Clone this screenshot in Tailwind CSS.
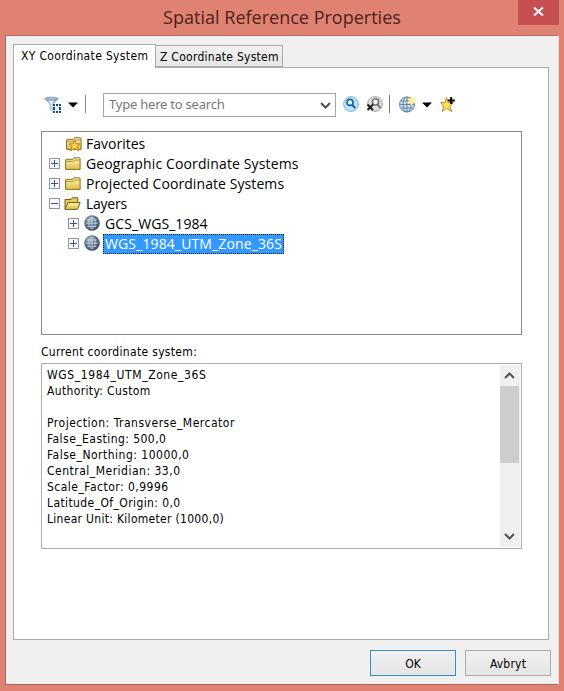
<!DOCTYPE html>
<html lang="en">
<head>
<meta charset="utf-8">
<title>Spatial Reference Properties</title>
<script src="https://cdn.jsdelivr.net/npm/@tailwindcss/browser@4"></script>
</head>
<body class="w-[564px] h-[691px] overflow-hidden bg-[#e08271] text-black font-['DejaVu_Sans_Condensed','DejaVu_Sans',sans-serif]">
<svg class="absolute w-0 h-0" aria-hidden="true">
  <defs>
    <linearGradient id="fold" x1="0" y1="0" x2="0" y2="1"><stop offset="0" stop-color="#fdf3b0"/><stop offset="1" stop-color="#dfbf4d"/></linearGradient>
    <radialGradient id="ball" cx=".38" cy=".3" r=".75"><stop offset="0" stop-color="#a3b1bf"/><stop offset=".5" stop-color="#62778c"/><stop offset="1" stop-color="#35485a"/></radialGradient>
    <symbol id="plus" viewBox="0 0 11 11"><rect x=".5" y=".5" width="10" height="10" fill="#f7f8fa" stroke="#8f959e"/><path d="M2 5.5h7M5.5 2v7" stroke="#34548e"/></symbol>
    <symbol id="minus" viewBox="0 0 11 11"><rect x=".5" y=".5" width="10" height="10" fill="#f7f8fa" stroke="#8f959e"/><path d="M2 5.5h7" stroke="#34548e"/></symbol>
    <symbol id="folder" viewBox="0 0 16 14"><path d="M.6 12.4V2.9q0-.6.6-.6h6.6l1.2-1.5h5.2q.9 0 .9.9v10.7z" fill="url(#fold)" stroke="#85701d"/><path d="M1 4.3h7.4l1-1.2h5.3" fill="none" stroke="#ad963b"/></symbol>
    <symbol id="globe" viewBox="0 0 16 16"><circle cx="8" cy="8" r="7.8" fill="url(#ball)"/><g fill="none" stroke="#e6edf5" stroke-width=".8" stroke-dasharray="1.6 .8"><path d="M3.4 5h9.2M2.4 8.2h11.2M3.4 11.4h9.2M8 2.4v11.4"/><ellipse cx="8" cy="8" rx="3.3" ry="5.6"/></g></symbol>
  </defs>
</svg>

<header class="relative h-[35px] flex justify-center">
  <h1 class="pt-[4px] leading-[26px] text-[18px] tracking-[0.01px] text-[#4d231e] whitespace-nowrap font-['Open_Sans',sans-serif]">Spatial Reference Properties</h1>
  <button class="absolute left-[518px] top-0 w-[41px] h-[25px] bg-[#c84f51] grid place-items-center" aria-label="Close">
    <svg class="w-[11px] h-[9px] -mt-[2px]" viewBox="0 0 11 9"><path d="M1 0.5L10 8.5M10 0.5L1 8.5" stroke="#fff" stroke-width="2"/></svg>
  </button>
</header>

<main class="ml-[5px] w-[554px] h-[650px] bg-[#f0f0f0] border border-[#a8675c] border-t-[#c06e61] border-r-[#f3d9d2] pl-[7px] pt-[8px]">
  <nav class="flex items-end h-[24px] relative -mb-px z-10">
    <div class="w-[143px] h-[24px] bg-white border border-b-0 border-[#acacac] pl-[7px] text-[12px] leading-[23px] tracking-[0.35px] whitespace-nowrap">XY Coordinate System</div>
    <div class="w-[128px] h-[22px] mb-px -ml-px bg-gradient-to-b from-[#f1f1f1] to-[#e6e6e6] border border-[#acacac] pl-[4px] text-[12px] leading-[22px] tracking-[0.27px] whitespace-nowrap">Z Coordinate System</div>
  </nav>
  <section class="w-[536px] h-[573px] bg-white border border-[#acacac] pl-[27px] pt-[25px]">
    <div class="flex items-center h-[24px]">
      <svg class="w-[18px] h-[18px] ml-[3px] -mt-px" viewBox="0 0 18 18"><defs><linearGradient id="fun"><stop stop-color="#5c85a8"/><stop offset=".45" stop-color="#e4f1f9"/><stop offset="1" stop-color="#668dac"/></linearGradient></defs><path d="M1 2.6Q7.5 5 14 2.6L9.3 8v7.2L6 13V8z" fill="url(#fun)" stroke="#7896ad" stroke-width=".7"/><ellipse cx="7.5" cy="2.6" rx="6.5" ry="1.4" fill="#a9c3d6" stroke="#6889a3" stroke-width=".7"/><rect x="9" y="8" width="8" height="9" fill="#e8f2fa"/><path d="M9 9h8M9 16h8" stroke="#174b78" stroke-width="2" stroke-dasharray="2 1"/><path d="M10 11v3M16 11v3" stroke="#174b78" stroke-width="2"/></svg>
      <svg class="w-[10px] h-[6px] ml-[6px] -mt-px" viewBox="0 0 10 6"><path d="M0 .5h10L5 5.5z" fill="#000"/></svg>
      <div class="w-px h-[18px] bg-[#8c8c8c] ml-[7px] -mt-[2px]"></div>
      <div class="flex items-center justify-between w-[233px] h-[24px] ml-[17px] pl-[5px] pr-[4px] border border-[#a5a5a5] text-[#777] text-[13px] tracking-[-0.22px] whitespace-nowrap"><span class="font-['Noto_Sans',sans-serif]">Type here to search</span>
        <svg class="w-[11px] h-[7px]" viewBox="0 0 11 7"><path d="M1 1l4.5 4.5L10 1" fill="none" stroke="#505050" stroke-width="2"/></svg>
      </div>
      <svg class="w-[16px] h-[16px] ml-[7px] -mt-[2px]" viewBox="0 0 16 16"><circle cx="8" cy="8" r="7.4" fill="#b9e3f8" stroke="#76b8dc"/><circle cx="7" cy="6.4" r="3" fill="#e4f7ff" stroke="#176498" stroke-width="1.6"/><path d="M9.2 8.8l3 3.2" stroke="#176498" stroke-width="2"/></svg>
      <svg class="w-[17px] h-[16px] ml-[7px] -mt-[2px]" viewBox="0 0 17 16"><circle cx="9" cy="8" r="7.4" fill="#dedede" stroke="#a5a5a5"/><circle cx="9.5" cy="6" r="3.1" fill="#f2f2f2" stroke="#666" stroke-width="1.4"/><path d="M11.5 8.5l3 3.5" stroke="#666" stroke-width="1.7"/><path d="M1.5 8.5l5.5 5.5M7 8.5l-5.5 5.5" stroke="#222" stroke-width="2"/></svg>
      <div class="w-px h-[18px] bg-[#777] ml-[6px] -mt-[2px]"></div>
      <svg class="w-[17px] h-[17px] ml-[9px] -mt-px" viewBox="0 0 17 17"><circle cx="8" cy="8.5" r="7.5" fill="#cfe0ee" stroke="#6683a1"/><g fill="none" stroke="#5e7da3" stroke-width=".9"><path d="M1.8 5h12M.7 8.5h15M1.8 12h12M8 1v15"/><ellipse cx="8" cy="8.5" rx="4" ry="7.4"/></g><path d="M12 0l1.2 2.8 3.3-.8-1.7 2.8L17 7l-3.3-.1L12.5 10l-1.2-3L8 7l2.1-2.3L8.6 2l2.8.7z" fill="#fff29a" stroke="#eadb79" stroke-width=".4"/></svg>
      <svg class="w-[10px] h-[6px] ml-[6px] -mt-px" viewBox="0 0 10 6"><path d="M0 .5h10L5 5.5z" fill="#000"/></svg>
      <svg class="w-[16px] h-[17px] ml-[8px] -mt-px" viewBox="0 0 16 17"><path d="M6.5 1.5l1.7 5h5.3l-4 3.5 2.3 5.6-5.3-3.4-4.3 3.4 1.5-5.5L.8 6.6h4.3z" fill="#ffe54f" stroke="#c9832d"/><path d="M11.2 1v7M7.8 4.5h7" stroke="#000" stroke-width="2"/></svg>
    </div>

    <div class="mt-[14px] w-[481px] h-[204px] border border-[#828790] pt-[2px] font-['Open_Sans',sans-serif] text-[14px] leading-[20px] whitespace-nowrap">
      <div class="flex items-center h-[20px] pl-[24px]">
        <svg class="w-[17px] h-[16px] -mt-px" viewBox="0 0 17 16"><use href="#folder" width="16" height="14" y="1"/><path d="M8.7 4l1.5 3.8h4.1l-3.2 2.6 1.6 4.5-4-2.5-4 2.5L6 10.4 3 7.8h4.2z" fill="#ffd84b" stroke="#c87922"/></svg>
        <span class="ml-[3px] tracking-[0px]">Favorites</span></div>
      <div class="flex items-center h-[20px] pl-[7px]"><svg class="size-[11px] -mt-px"><use href="#plus"/></svg><svg class="w-[16px] h-[14px] ml-[5px] -mt-px"><use href="#folder"/></svg><span class="ml-[5px] tracking-[0.13px]">Geographic Coordinate Systems</span></div>
      <div class="flex items-center h-[20px] pl-[7px]"><svg class="size-[11px] -mt-px"><use href="#plus"/></svg><svg class="w-[16px] h-[14px] ml-[5px] -mt-px"><use href="#folder"/></svg><span class="ml-[5px] tracking-[0.08px]">Projected Coordinate Systems</span></div>
      <div class="flex items-center h-[20px] pl-[7px]"><svg class="size-[11px] -mt-px"><use href="#minus"/></svg><svg class="w-[17px] h-[14px] ml-[4px] -mt-px" viewBox="0 0 17 14"><path d="M1 12V2.5h6l1.2-1.7h5.6V5" fill="#e7ca5c" stroke="#75621a"/><path d="M1 12.4L4 5.5h12.2l-2.7 6.9z" fill="url(#fold)" stroke="#75621a"/></svg><span class="ml-[5px] tracking-[-0.25px]">Layers</span></div>
      <div class="flex items-center h-[20px] pl-[26px]"><svg class="size-[11px] -mt-px"><use href="#plus"/></svg><svg class="size-[16px] ml-[5px] -mt-[2px]"><use href="#globe"/></svg><span class="ml-[5px] tracking-[0.08px]">GCS_WGS_1984</span></div>
      <div class="flex items-center h-[20px] pl-[26px]"><svg class="size-[11px] -mt-px"><use href="#plus"/></svg><svg class="size-[16px] ml-[5px] -mt-[2px]"><use href="#globe"/></svg><span class="ml-[3px] w-[181px] h-[20px] pl-px leading-[18px] bg-[#3399ff] text-white border border-dotted border-[#202020] tracking-[0.12px]">WGS_1984_UTM_Zone_36S</span></div>
    </div>

    <div class="mt-[9px] h-[16px] text-[12px] leading-[16px] tracking-[0.33px] whitespace-nowrap">Current coordinate system:</div>
    <div class="mt-[3px] w-[481px] h-[186px] border border-[#acacac] flex justify-between p-px">
      <div class="pl-[4px] pt-[2px] text-[12px] leading-[16px] whitespace-nowrap">
        <p class="tracking-[0.6px]">WGS_1984_UTM_Zone_36S</p>
        <p class="tracking-[0.36px]">Authority: Custom</p>
        <p class="mt-[16px] tracking-[0.52px]">Projection: Transverse_Mercator</p>
        <p class="tracking-[0.45px]">False_Easting: 500,0</p>
        <p class="tracking-[0.5px]">False_Northing: 10000,0</p>
        <p class="tracking-[0.5px]">Central_Meridian: 33,0</p>
        <p class="tracking-[0.48px]">Scale_Factor: 0,9996</p>
        <p class="tracking-[0.4px]">Latitude_Of_Origin: 0,0</p>
        <p class="tracking-[0.3px]">Linear Unit: Kilometer (1000,0)</p>
      </div>
      <div class="w-[20px] bg-[#f0f0f0] flex flex-col">
        <svg class="w-[19px] h-[21px]" viewBox="0 0 19 21"><path d="M5 13l4.5-4.5L14 13" fill="none" stroke="#505050" stroke-width="2"/></svg>
        <div class="w-[19px] h-[77px] bg-[#cdcdcd]"></div>
        <svg class="w-[19px] h-[21px] mt-auto" viewBox="0 0 19 21"><path d="M5 8l4.5 4.5L14 8" fill="none" stroke="#505050" stroke-width="2"/></svg>
      </div>
    </div>
  </section>
  <footer class="mt-[10px] ml-[357px] flex gap-[9px] text-[12px]">
    <button class="w-[86px] h-[26px] pt-px border border-[#3c8dc5] bg-gradient-to-b from-[#f0f0f0] to-[#e5e5e5]">OK</button>
    <button class="w-[86px] h-[26px] pt-px border border-[#acacac] bg-gradient-to-b from-[#f0f0f0] to-[#e5e5e5] tracking-[0.2px]">Avbryt</button>
  </footer>
</main>
</body>
</html>
